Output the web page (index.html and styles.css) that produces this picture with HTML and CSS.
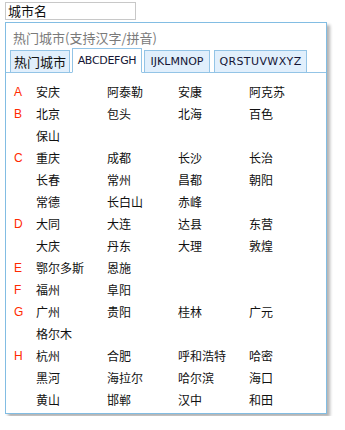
FILE: index.html
```html
<!DOCTYPE html>
<html lang="zh-CN">
<head>
    <meta charset="UTF-8">
    <meta name="viewport" content="width=device-width, initial-scale=1.0">
    <title>城市选择</title>
    <link rel="stylesheet" href="styles.css">
</head>
<body>
    <div class="city-input">城市名</div>
    <div class="city-popup">
        <div class="popup-title">热门城市(支持汉字/拼音)</div>
        <div class="tabs">
            <div class="tab tab-hot">热门城市</div>
            <div class="tab latin tab-ah active">ABCDEFGH</div>
            <div class="tab latin tab-ip">IJKLMNOP</div>
            <div class="tab latin tab-qz">QRSTUVWXYZ</div>
        </div>
        <div class="city-list">
            <div class="group">
                <div class="letter">A</div>
                <div class="cities">
                    <span>安庆</span><span>阿泰勒</span><span>安康</span><span>阿克苏</span>
                </div>
            </div>
            <div class="group">
                <div class="letter">B</div>
                <div class="cities">
                    <span>北京</span><span>包头</span><span>北海</span><span>百色</span>
                    <span>保山</span>
                </div>
            </div>
            <div class="group">
                <div class="letter">C</div>
                <div class="cities">
                    <span>重庆</span><span>成都</span><span>长沙</span><span>长治</span>
                    <span>长春</span><span>常州</span><span>昌都</span><span>朝阳</span>
                    <span>常德</span><span>长白山</span><span>赤峰</span>
                </div>
            </div>
            <div class="group">
                <div class="letter">D</div>
                <div class="cities">
                    <span>大同</span><span>大连</span><span>达县</span><span>东营</span>
                    <span>大庆</span><span>丹东</span><span>大理</span><span>敦煌</span>
                </div>
            </div>
            <div class="group">
                <div class="letter">E</div>
                <div class="cities">
                    <span>鄂尔多斯</span><span>恩施</span>
                </div>
            </div>
            <div class="group">
                <div class="letter">F</div>
                <div class="cities">
                    <span>福州</span><span>阜阳</span>
                </div>
            </div>
            <div class="group">
                <div class="letter">G</div>
                <div class="cities">
                    <span>广州</span><span>贵阳</span><span>桂林</span><span>广元</span>
                    <span>格尔木</span>
                </div>
            </div>
            <div class="group">
                <div class="letter">H</div>
                <div class="cities">
                    <span>杭州</span><span>合肥</span><span>呼和浩特</span><span>哈密</span>
                    <span>黑河</span><span>海拉尔</span><span>哈尔滨</span><span>海口</span>
                    <span>黄山</span><span>邯郸</span><span>汉中</span><span>和田</span>
                </div>
            </div>
        </div>
    </div>
</body>
</html>
```

FILE: styles.css
```css
body {
    margin: 0;
    padding: 2px 5px;
    background-color: #ffffff;
    font-family: "Noto Sans CJK SC", "Noto Sans", sans-serif;
    color: #111111;
}

.city-input {
    box-sizing: border-box;
    width: 131px;
    height: 18px;
    padding-left: 2px;
    border: 1px solid #c8c8c8;
    font-size: 13px;
    line-height: 16px;
}

.city-popup {
    box-sizing: border-box;
    width: 322px;
    margin-top: 2px;
    padding: 5px 0 2px 0;
    border: 1px solid #82bde3;
    box-shadow: 3px 3px 3px #b4b4b4;
    background-color: #ffffff;
}

.popup-title {
    padding-left: 7px;
    font-size: 13px;
    line-height: 20px;
    color: #7a7a7a;
}

.tabs {
    display: flex;
    align-items: flex-end;
    gap: 2px;
    height: 24px;
    padding-left: 4px;
    border-bottom: 1px solid #93c4e6;
}

.tab {
    box-sizing: border-box;
    height: 23px;
    margin-bottom: -1px;
    border: 1px solid #93c4e6;
    background-color: #e1effc;
    font-size: 13px;
    line-height: 21px;
    text-align: center;
    white-space: nowrap;
    color: #111111;
}

.tab.latin {
    font-family: "DejaVu Sans", sans-serif;
    font-size: 11px;
    color: #151535;
}

.tab-hot {
    width: 60px;
}

.tab-ah {
    width: 70px;
    letter-spacing: -0.3px;
}

.tab-ip {
    width: 66px;
}

.tab-qz {
    width: 93px;
    margin-left: 2px;
    letter-spacing: 0.4px;
}

.tab.active {
    height: 25px;
    line-height: 23px;
    background-color: #ffffff;
    border-bottom-color: #ffffff;
}

.city-list {
    padding-top: 8px;
}

.group {
    display: flex;
}

.letter {
    width: 22px;
    padding-left: 8px;
    font-family: "Liberation Sans", sans-serif;
    font-size: 12px;
    line-height: 22px;
    color: #ff2a00;
}

.cities {
    display: grid;
    grid-template-columns: repeat(4, 71px);
}

.cities span {
    font-size: 12px;
    line-height: 22px;
    white-space: nowrap;
}
```
